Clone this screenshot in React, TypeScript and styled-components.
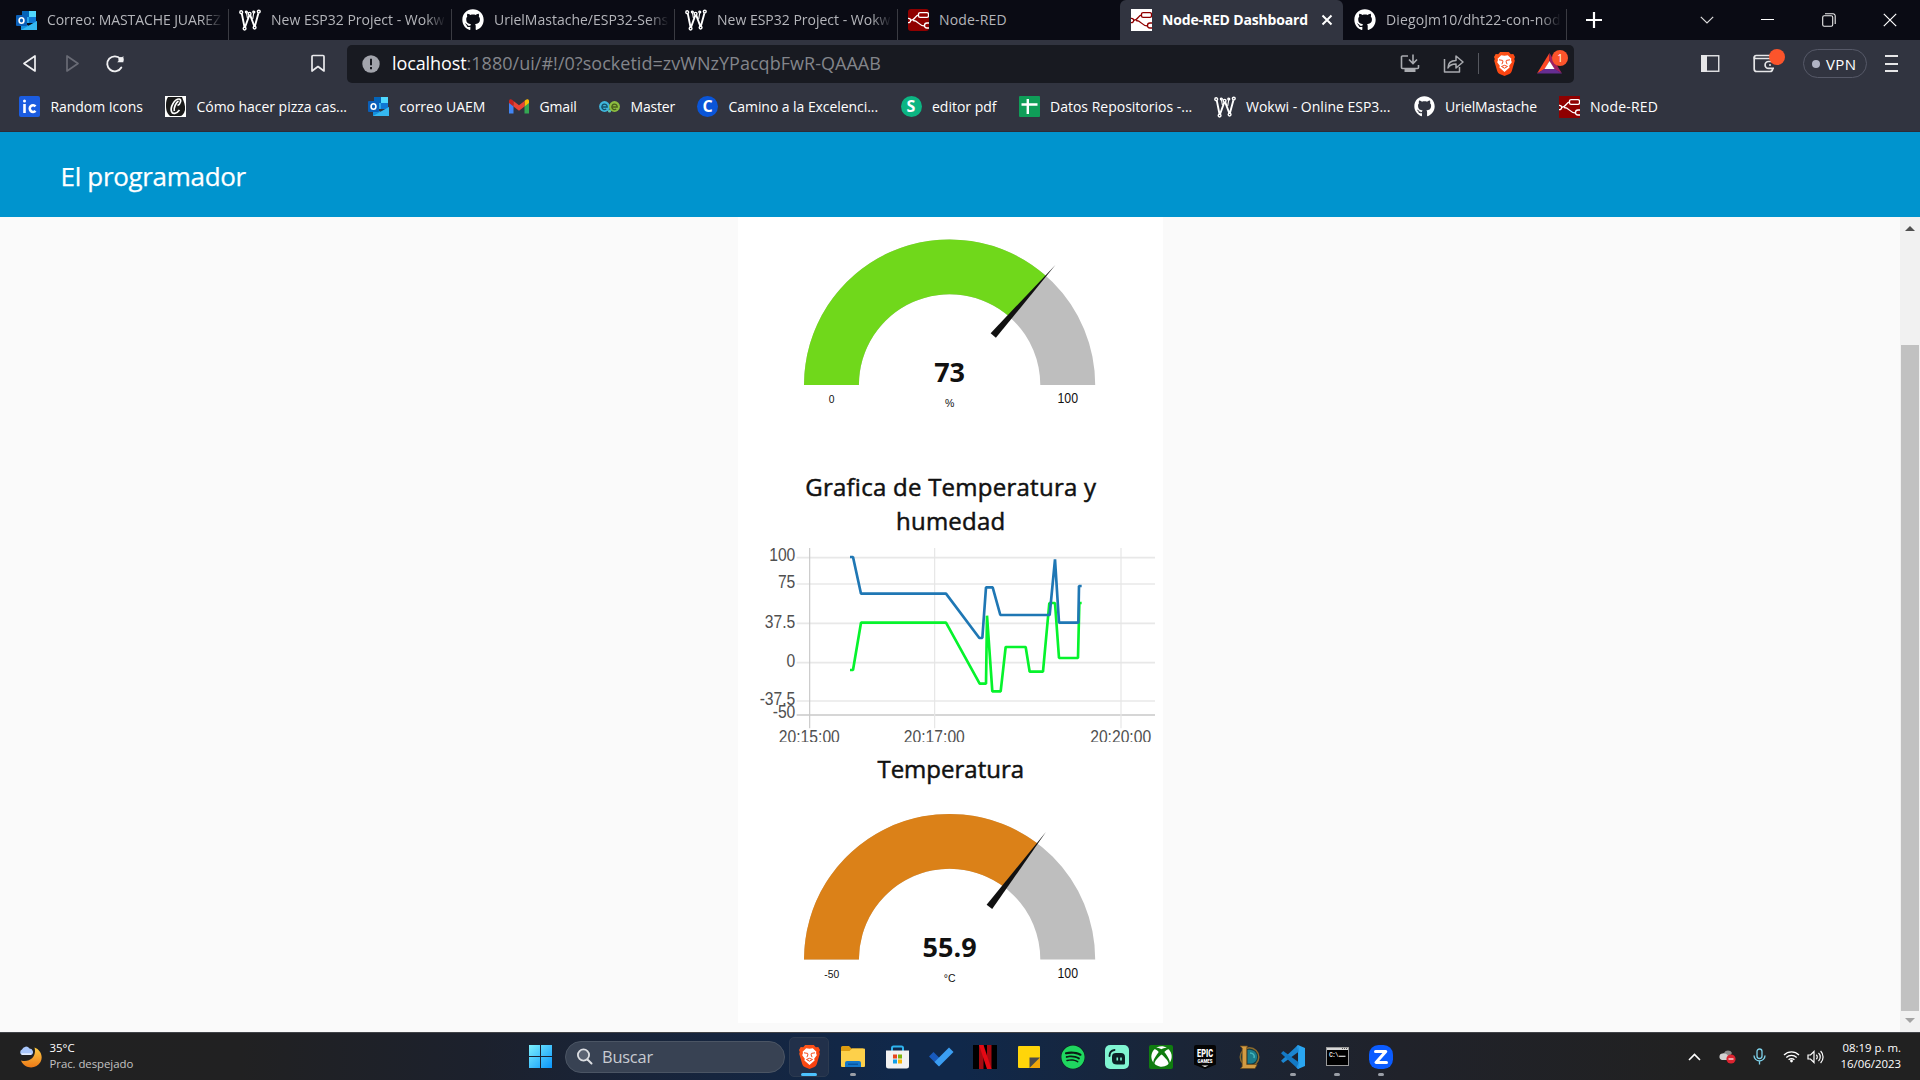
import React, { ReactNode } from "react";
import styled, { createGlobalStyle } from "styled-components";
import { FaGithub, FaSpotify, FaXbox } from "react-icons/fa";

const FONT = `"Open Sans", "Noto Sans", sans-serif`;

const GlobalStyle = createGlobalStyle`
  html, body { margin: 0; padding: 0; background: #fafafa; }
  body { font-family: ${FONT}; overflow: hidden; }
  * { box-sizing: border-box; }
  svg { display: block; flex: none; }
`;

const Screen = styled.div`
  width: 1920px;
  height: 1080px;
  display: flex;
  flex-direction: column;
  overflow: hidden;
`;

/* ---------- tab strip ---------- */

const TabStrip = styled.div`
  height: 40px;
  flex: none;
  display: flex;
  align-items: stretch;
  padding-left: 5px;
  background: #0a0b14;
`;

const Tab = styled.div<{ $active?: boolean; $divider?: boolean }>`
  position: relative;
  flex: 0 0 223px;
  width: 223px;
  display: flex;
  align-items: center;
  padding: 0 5px 0 10.5px;
  color: ${(p) => (p.$active ? "#ffffff" : "#b4b5ba")};
  background: ${(p) => (p.$active ? "#313440" : "transparent")};
  border-radius: 6px 6px 0 0;
  &::after {
    content: "";
    display: ${(p) => (p.$divider ? "block" : "none")};
    position: absolute;
    right: -1px;
    top: 9px;
    bottom: 0;
    width: 1px;
    background: #3a3b42;
  }
`;

const TabTitle = styled.span<{ $bold?: boolean; $fade?: boolean; $spacing?: number }>`
  flex: 1;
  min-width: 0;
  margin-left: 10.5px;
  overflow: hidden;
  white-space: nowrap;
  font-size: 14px;
  line-height: 20px;
  letter-spacing: ${(p) => p.$spacing ?? 0}px;
  font-weight: ${(p) => (p.$bold ? 700 : 400)};
  mask-image: ${(p) => (p.$fade ? "linear-gradient(90deg, #000 88%, transparent 100%)" : "none")};
`;

const TabClose = styled.span`
  width: 22px;
  display: flex;
  justify-content: center;
  margin-left: 3px;
`;

const NewTab = styled.div`
  width: 56px;
  display: flex;
  align-items: center;
  justify-content: center;
`;

const WindowButtons = styled.div`
  margin-left: auto;
  display: flex;
`;

const WindowButton = styled.div`
  width: 61px;
  display: flex;
  align-items: center;
  justify-content: center;
`;

/* ---------- toolbar ---------- */

const Toolbar = styled.div`
  height: 47px;
  flex: none;
  display: flex;
  align-items: center;
  background: #313440;
`;

const NavButtons = styled.div`
  width: 347px;
  display: flex;
  align-items: center;
  padding-left: 22px;
`;

const NavIcon = styled.span<{ $ml?: number }>`
  display: flex;
  margin-left: ${(p) => p.$ml ?? 0}px;
`;

const AddressBar = styled.div`
  width: 1227px;
  height: 38px;
  display: flex;
  align-items: center;
  padding-left: 15px;
  border-radius: 5px;
  background: #181a21;
`;

const Url = styled.span`
  margin-left: 12px;
  font-size: 18px;
  line-height: 26px;
  letter-spacing: 0.03px;
  white-space: nowrap;
  color: #83858b;
  margin-top: -1px;
`;

const Host = styled.span`
  color: #fff;
  letter-spacing: -0.1px;
`;

const AddressActions = styled.div`
  margin-left: auto;
  display: flex;
  align-items: center;
  padding-right: 11px;
`;

const Divider = styled.span`
  width: 1.5px;
  height: 21px;
  margin: 0 15px 0 14px;
  background: #56585f;
`;

const Badged = styled.span<{ $ml: number }>`
  position: relative;
  display: flex;
  margin-left: ${(p) => p.$ml}px;
`;

const Badge = styled.span<{ $top: number; $right: number }>`
  position: absolute;
  top: ${(p) => p.$top}px;
  right: ${(p) => p.$right}px;
  width: 16px;
  height: 16px;
  display: flex;
  align-items: center;
  justify-content: center;
  border-radius: 50%;
  background: #fb542b;
  color: #fff;
  font-size: 10px;
  line-height: 16px;
`;

const ToolbarActions = styled.div`
  flex: 1;
  display: flex;
  align-items: center;
  padding-left: 127px;
`;

const VpnPill = styled.div`
  width: 64px;
  height: 29px;
  margin-left: 28px;
  display: flex;
  align-items: center;
  padding-left: 8px;
  border: 1.5px solid #565968;
  border-radius: 15px;
  color: #fff;
  font-size: 15px;
  letter-spacing: 0.4px;
`;

const VpnDot = styled.span`
  width: 8px;
  height: 8px;
  margin-right: 6px;
  border-radius: 50%;
  background: #b0b3c4;
`;

const Burger = styled.div`
  width: 13px;
  height: 17px;
  margin-left: 18px;
  display: flex;
  flex-direction: column;
  justify-content: space-between;
`;

const BurgerLine = styled.span`
  height: 2px;
  background: #e6e6e8;
`;

/* ---------- bookmarks ---------- */

const Bookmarks = styled.div`
  height: 45px;
  flex: none;
  display: flex;
  align-items: flex-start;
  padding: 9px 0 0 19px;
  background: #313440;
  border-bottom: 1px solid #2c2c37;
`;

const Bookmark = styled.div<{ $w: number }>`
  flex: 0 0 ${(p) => p.$w}px;
  height: 21px;
  display: flex;
  align-items: center;
`;

const BookmarkText = styled.span<{ $spacing?: number }>`
  margin-left: 10.5px;
  color: #fff;
  font-size: 14px;
  line-height: 20px;
  letter-spacing: ${(p) => p.$spacing ?? 0}px;
  white-space: nowrap;
`;

/* ---------- dashboard ---------- */

const DashHeader = styled.header`
  height: 85px;
  flex: none;
  padding: 26px 0 0 60.5px;
  background: #0094ce;
  color: #fff;
  font-size: 26px;
  line-height: 36px;
  letter-spacing: -0.32px;
  -webkit-text-stroke: 0.25px #fff;
`;

const DashBody = styled.main`
  height: 815px;
  flex: none;
  display: flex;
  background: #fafafa;
`;

const Canvas = styled.div`
  flex: 1;
  display: flex;
  justify-content: flex-start;
  align-items: flex-start;
  padding-left: 738px;
`;

const Group = styled.section`
  width: 425px;
  height: 806px;
  display: flex;
  flex-direction: column;
  background: #fff;
`;

const ChartTitle = styled.h2<{ $mt: number; $mb: number; $spacing?: number }>`
  margin: ${(p) => p.$mt}px 60px ${(p) => p.$mb}px 60.5px;
  color: #111;
  font-size: 24px;
  line-height: 34px;
  font-weight: 500;
  letter-spacing: ${(p) => p.$spacing ?? 0}px;
  text-align: center;
  -webkit-text-stroke: 0.5px #111;
`;

const Scrollbar = styled.div`
  width: 20px;
  display: flex;
  flex-direction: column;
  align-items: center;
  background: #f1f1f1;
  padding: 9px 0;
`;

const Thumb = styled.div`
  width: 18px;
  height: 666px;
  margin: 114px 0 auto;
  background: #c1c1c1;
`;

const Arrow = styled.span<{ $down?: boolean }>`
  width: 0;
  height: 0;
  border: 5px solid transparent;
  border-top: ${(p) => (p.$down ? "5px solid #a3a3a3" : "0")};
  border-bottom: ${(p) => (p.$down ? "0" : "5px solid #505050")};
`;

/* ---------- taskbar ---------- */

const Taskbar = styled.footer`
  height: 48px;
  flex: none;
  display: flex;
  align-items: center;
  border-top: 1px solid #414348;
  background: linear-gradient(90deg, #212121 0, #212122 240px, #1c212d 480px, #18243a 650px, #10284a 900px, #10284a 960px, #1a2537 1180px, #20222a 1400px, #212121 1700px);
  color: #fff;
`;

const Weather = styled.div`
  width: 518px;
  display: flex;
  align-items: center;
  padding-left: 18px;
`;

const TwoLines = styled.div<{ $right?: boolean }>`
  display: flex;
  flex-direction: column;
  margin-left: ${(p) => (p.$right ? 0 : 6.5)}px;
  margin-top: -2px;
  font-size: 11.4px;
  line-height: 16px;
  white-space: nowrap;
  text-align: ${(p) => (p.$right ? "right" : "left")};
`;

const Muted = styled.span`
  color: #c3c3c3;
  letter-spacing: -0.05px;
`;

const SearchBox = styled.div`
  width: 220px;
  height: 32px;
  margin: 0 2px 0 3px;
  display: flex;
  align-items: center;
  padding-left: 10px;
  border: 1px solid #4b5564;
  border-radius: 16px;
  background: #384253;
  color: #c8cbd1;
  font-size: 16.4px;
  letter-spacing: -0.2px;
`;

const SearchText = styled.span`
  margin-left: 9px;
`;

const Tile = styled.div<{ $active?: boolean }>`
  position: relative;
  width: 40px;
  height: 40px;
  margin: 0 2px;
  display: flex;
  align-items: center;
  justify-content: center;
  border-radius: 5px;
  border: 1px solid ${(p) => (p.$active ? "#2c3a50" : "transparent")};
  background: ${(p) => (p.$active ? "#21304a" : "transparent")};
`;

const Running = styled.span<{ $active?: boolean }>`
  position: absolute;
  bottom: 0;
  left: 50%;
  width: ${(p) => (p.$active ? 16 : 6)}px;
  height: 3px;
  margin-left: ${(p) => (p.$active ? -8 : -3)}px;
  border-radius: 2px;
  background: ${(p) => (p.$active ? "#4cc2ff" : "#9a9ea6")};
`;

const Tray = styled.div`
  margin-left: auto;
  display: flex;
  align-items: center;
  padding-right: 19px;
`;

const TrayIcon = styled.span<{ $mr: number }>`
  display: flex;
  margin-right: ${(p) => p.$mr}px;
`;

/* ---------- icons ---------- */

const Outlook = () => (
  <svg width="21" height="21" viewBox="0 0 21 21">
    <path d="M6 1h14v12H6z" fill="#28a8ea" />
    <path d="M6 1h7v6H6z" fill="#0364b8" />
    <path d="M13 1h7v6h-7z" fill="#50d9ff" />
    <path d="M13 7h7v6h-7z" fill="#0f78d4" />
    <path d="M5 11l8 5 8-5v9H5z" fill="#1490df" />
    <path d="M5 20L21 11v9z" fill="#35b8f1" />
    <rect x="0" y="5" width="11" height="11" rx="1" fill="#0a5fb8" />
    <ellipse cx="5.5" cy="10.5" rx="2.4" ry="2.8" fill="none" stroke="#fff" strokeWidth="1.6" />
  </svg>
);

const Wokwi = () => (
  <svg width="22" height="22" viewBox="0 0 22 22" fill="none" stroke="#fff" strokeWidth="1.4">
    <path d="M2.8 4.6L5.500 18M6.200 17.800L10.300 6.200M11.200 6.200l4 10.800M16 16.800L19.400 4.200" strokeWidth="1.9" />
    <circle cx="2.200" cy="3.200" r="1.400" />
    <circle cx="10.600" cy="4.800" r="1.400" />
    <circle cx="7.400" cy="3" r=".900" />
    <circle cx="19.800" cy="2.600" r="1.400" />
    <circle cx="14.800" cy="3" r=".900" />
    <circle cx="5.600" cy="19.600" r="1.400" />
    <circle cx="15.600" cy="18.600" r="1.400" />
    <path d="M7.500 4l.900 5M14.700 4l-1 6" strokeWidth="1.100" />
  </svg>
);

const NodeRed = ({ light, radius = 0 }: { light?: boolean; radius?: number }) => {
  const fg = light ? "#8f0000" : "#fff";
  const bg = light ? "#fff" : "#8f0000";
  return (
    <svg width="21" height="22" viewBox="0 0 21 22">
      <rect width="21" height="22" rx={radius} fill={bg} />
      <g fill={bg} stroke={fg} strokeWidth="1.3">
        <path d="M2 11.5C8 11.5 6.5 6 11 6M5 11.5c6 0 5 5.500 12 5.500" fill="none" />
        <rect x="10.500" y="3.600" width="10" height="4.800" rx="1.600" />
        <path d="M-1 9.300h1.500a2 2 0 0 1 0 4.400H-1M22 14h-3a2 2 0 0 0 0 5h3" />
      </g>
    </svg>
  );
};

const IcIcon = () => (
  <svg width="21" height="21" viewBox="0 0 21 21">
    <rect width="21" height="21" rx="2" fill="#1b5ce0" />
    <circle cx="5.500" cy="5" r="1.500" fill="#fff" />
    <path d="M5.500 8v9M16.500 10.300a3.300 3.400 0 1 0 0 4.600" fill="none" stroke="#fff" strokeWidth="2.600" />
  </svg>
);

const PizzaIcon = () => (
  <svg width="21" height="21" viewBox="0 0 21 21">
    <rect width="21" height="21" fill="#fff" />
    <path d="M3 1h14c2 5 3.500 8 3 13-1 4-3 6-5 6H5C1.500 17 1 13 1 9c0-3 .500-6 2-8z" fill="#1a1a1a" />
    <path d="M12.500 9.500c3-1 4.500-6.500 1.500-6.500C9.500 3 5 11 6.500 15.500c1 3 5 2.500 8-1.500M13.500 5c-2.500 1.500-5 7-4.200 10" fill="none" stroke="#fff" strokeWidth="1.700" />
  </svg>
);

const GmailIcon = () => (
  <svg width="20" height="16" viewBox="0 0 20 16">
    <path d="M0 3v11.500h4.500V6z" fill="#4285f4" />
    <path d="M20 3v11.500h-4.500V6z" fill="#34a853" />
    <path d="M15.500 2v5.500L20 4V2c0-2-2-2.500-3.500-1z" fill="#fbbc04" />
    <path d="M4.500 2v5.500L0 4V2C0 0 2-.500 3.500 1z" fill="#c5221f" />
    <path d="M4.500 2L10 6.300 15.500 2v5.500L10 11.700 4.500 7.500z" fill="#ea4335" />
  </svg>
);

const MasterIcon = () => (
  <svg width="21" height="14" viewBox="0 0 21 14" fill="none" strokeWidth="2.200">
    <circle cx="5.500" cy="6.500" r="5.400" fill="#3fb6dd" />
    <circle cx="15.500" cy="6.500" r="5.400" fill="#8cbd3f" />
    <path d="M3 7h5.200a2.700 2.700 0 1 0-1 2" stroke="#15506b" strokeWidth="1.300" />
    <path d="M13 7h5.200a2.700 2.700 0 1 0-1 2" stroke="#4b5f1d" strokeWidth="1.300" />
    <circle cx="10.500" cy="11" r="1.600" fill="#5fc7b0" />
  </svg>
);

const LetterDisc = styled.span<{ $bg: string }>`
  width: 21px;
  height: 21px;
  display: flex;
  align-items: center;
  justify-content: center;
  border-radius: 50%;
  background: ${(p) => p.$bg};
  color: #fff;
  font: 700 16px/21px ${FONT};
`;

const SheetsIcon = () => (
  <svg width="21" height="21" viewBox="0 0 21 21">
    <rect width="21" height="21" rx="1" fill="#0f9d58" />
    <path d="M8.800 3v15M2.500 8.500h16" stroke="#fff" strokeWidth="2.400" />
  </svg>
);

const BackIcon = ({ dim, flip }: { dim?: boolean; flip?: boolean }) => (
  <svg width="15" height="19" viewBox="0 0 15 19">
    <path
      d={flip ? "M2 2v15L13 9.500z" : "M13 2v15L2 9.500z"}
      fill="none"
      stroke={dim ? "#696b75" : "#f0f0f2"}
      strokeWidth="1.700"
      strokeLinejoin="round"
    />
  </svg>
);

const ReloadIcon = () => (
  <svg width="20" height="20" viewBox="0 0 20 20">
    <path d="M16.300 13.500A7.500 7.500 0 1 1 15.500 5" fill="none" stroke="#f0f0f2" strokeWidth="1.900" strokeLinecap="round" />
    <path d="M18.400 2v6.300h-6.200z" fill="#f0f0f2" />
    <circle cx="16" cy="5.500" r="2.600" fill="#f0f0f2" />
  </svg>
);

const BookmarkIcon = () => (
  <svg width="16" height="19" viewBox="0 0 16 19">
    <path d="M2 2.500a1 1 0 0 1 1-1h10a1 1 0 0 1 1 1V17l-6-4.500L2 17z" fill="none" stroke="#e9e9ec" strokeWidth="1.700" strokeLinejoin="round" />
  </svg>
);

const InfoIcon = () => (
  <svg width="18" height="18" viewBox="0 0 18 18">
    <circle cx="9" cy="9" r="8.700" fill="#a2a4ac" />
    <path d="M9 3.800v6.400M9 12v2.200" stroke="#181a21" strokeWidth="2" />
  </svg>
);

const InstallIcon = () => (
  <svg width="20" height="19" viewBox="0 0 20 19" fill="none" stroke="#a9abb0" strokeWidth="1.600">
    <path d="M8 2H2.500a1 1 0 0 0-1 1v10.500a1 1 0 0 0 1 1h15a1 1 0 0 0 1-1V11" />
    <path d="M13 .500V9M9 5.500l4 4 4-4" />
    <path d="M4.500 16.500h11" strokeWidth="3" />
  </svg>
);

const ShareIcon = () => (
  <svg width="21" height="20" viewBox="0 0 21 20" fill="none" stroke="#a9abb0" strokeWidth="1.500" strokeLinejoin="round">
    <path d="M1.500 5v13h15v-5" />
    <path d="M5 14c0-5 3-7.500 8-7.500V2l7 6-7 6v-4c-4 0-6.500 1-8 4z" />
  </svg>
);

const BatIcon = () => (
  <svg width="26" height="21" viewBox="0 0 26 21">
    <path d="M12.500 0L0 20.500l8-4.500 4.500-8z" fill="#ff4724" />
    <path d="M12.500 0L25 20.500 17 16l-4.500-8z" fill="#9e1f63" />
    <path d="M0 20.500h25L17 15.500H8z" fill="#662d91" />
    <path d="M12.500 8l5 8h-10z" fill="#fff" />
  </svg>
);

const SidebarIcon = () => (
  <svg width="19" height="17" viewBox="0 0 19 17">
    <rect x=".750" y=".750" width="17" height="15.500" fill="none" stroke="#e6e6e8" strokeWidth="1.400" />
    <rect x="0" y="0" width="6" height="17" fill="#e6e6e8" />
  </svg>
);

const WalletIcon = () => (
  <svg width="22" height="19" viewBox="0 0 22 19" fill="none" stroke="#e6e6e8" strokeWidth="1.700">
    <path d="M19.500 7V5.500a1 1 0 0 0-1-1H1.500V3A1.500 1.500 0 0 1 3 1.500h14" />
    <path d="M1.200 2.500V15a2.500 2.500 0 0 0 2.500 2.500H17a2.500 2.500 0 0 0 2.500-2.500" />
    <path d="M21 7.500h-5.500a3.400 3.400 0 0 0 0 6.800H21M16 11h2" />
  </svg>
);

const MoonIcon = () => (
  <svg width="25" height="24" viewBox="0 0 25 24">
    <defs>
      <linearGradient id="moon" x1="0" y1="0" x2="0" y2="1">
        <stop offset="0" stopColor="#fccb45" />
        <stop offset="1" stopColor="#ee7a17" />
      </linearGradient>
    </defs>
    <path d="M16.500 2.500c6 2 9 9 6 14.500-4 7.500-16 7.500-19.500-1.500 9 2.500 16-4 13.500-13z" fill="url(#moon)" />
    <path d="M4 10a3 3 0 0 1 0-5.500 4.200 4.200 0 0 1 7.500-1A3.400 3.400 0 0 1 13 10z" fill="#a9c7fb" />
    <path d="M3 8.200h10.500a2 2 0 0 1-1 1.800H4z" fill="#e2ecff" />
  </svg>
);

const WindowsIcon = () => (
  <svg width="23" height="23" viewBox="0 0 23 23">
    <defs>
      <linearGradient id="win" x1="0" y1="0" x2="1" y2="1">
        <stop offset="0" stopColor="#7df0fd" />
        <stop offset="1" stopColor="#0a95fb" />
      </linearGradient>
    </defs>
    <path d="M0 0h11v11H0zM12 0h11v11H12zM0 12h11v11H0zM12 12h11v11H12z" fill="url(#win)" />
  </svg>
);

const SearchIcon = () => (
  <svg width="17" height="17" viewBox="0 0 17 17">
    <circle cx="7.500" cy="7" r="5.600" fill="#5a6272" stroke="#dcdee2" strokeWidth="1.800" />
    <path d="M11.500 11.500l4 4" stroke="#dcdee2" strokeWidth="2" strokeLinecap="round" />
  </svg>
);

const FolderIcon = () => (
  <svg width="24" height="22" viewBox="0 0 24 22">
    <path d="M0 1.500A1.500 1.500 0 0 1 1.500 0H8l2.500 2.500H22V8H0z" fill="#dd9c10" />
    <path d="M0 5h8.500L11 2.500h12A1 1 0 0 1 24 3.500V20a1 1 0 0 1-1 1H1a1 1 0 0 1-1-1z" fill="#fdd04a" />
    <path d="M4 21v-4a2 2 0 0 1 2-2h12a2 2 0 0 1 2 2v4z" fill="#1477c9" />
    <path d="M7 17.500h10v1.500H7z" fill="#0a569e" />
  </svg>
);

const StoreIcon = () => (
  <svg width="23" height="24" viewBox="0 0 23 24">
    <path d="M6 6V3a1.500 1.500 0 0 1 1.500-1.500h8A1.500 1.500 0 0 1 17 3v3" fill="none" stroke="#2fb3ee" strokeWidth="2" />
    <path d="M0 5.500h23V21a2.500 2.500 0 0 1-2.500 2.500h-18A2.500 2.500 0 0 1 0 21z" fill="#f2f2f2" />
    <path d="M7 9.500h4v4H7z" fill="#e8491f" />
    <path d="M12 9.500h4v4h-4z" fill="#7db50b" />
    <path d="M7 14.500h4v4H7z" fill="#10a1ea" />
    <path d="M12 14.500h4v4h-4z" fill="#fbb508" />
  </svg>
);

const TodoIcon = () => (
  <svg width="25" height="20" viewBox="0 0 25 20">
    <path d="M0 9.500L4.500 5l9.500 9.500-4.500 4.500z" fill="#185abd" />
    <path d="M5.500 15L20 .500 24.500 5 10 19.500z" fill="#3b9ef2" />
  </svg>
);

const NetflixIcon = () => (
  <svg width="24" height="24" viewBox="0 0 24 24">
    <rect width="24" height="24" fill="#000" />
    <path d="M6 0h4.500v24H6zM14 0h4.500v24H14z" fill="#a50b12" />
    <path d="M6 0h4.500l8 24H14z" fill="#e50914" />
  </svg>
);

const NotesIcon = () => (
  <svg width="22" height="22" viewBox="0 0 22 22">
    <path d="M0 1a1 1 0 0 1 1-1h20a1 1 0 0 1 1 1v20a1 1 0 0 1-1 1H1a1 1 0 0 1-1-1z" fill="#ffd50a" />
    <path d="M22 11.500V22H11.500z" fill="#f0a50a" />
    <path d="M11.500 22V11.500H22z" fill="#4b4b4b" />
  </svg>
);

const StreamlabsIcon = () => (
  <svg width="24" height="24" viewBox="0 0 24 24">
    <rect width="24" height="24" rx="5" fill="#80f5d2" />
    <path d="M4.500 11c0-3.500 1.500-5.500 5-6" fill="none" stroke="#0b2126" strokeWidth="1.900" strokeLinecap="round" />
    <path d="M7 11.500C7 9 8.500 8 11 8h5c2.500 0 4 1.500 4 4v6c0 1-.500 1.500-1.500 1.500H12c-3.500 0-5-1.500-5-4.500z" fill="#0b2126" />
    <path d="M12.300 12.500v3M16 12.500v3" stroke="#80f5d2" strokeWidth="1.600" />
  </svg>
);

const XboxTile = styled.span`
  width: 24px;
  height: 24px;
  display: flex;
  align-items: center;
  justify-content: center;
  border-radius: 2px;
  background: #107c10;
  color: #fff;
`;

const SpotifyDisc = styled.span`
  display: flex;
  border-radius: 50%;
  background: #0c1d14;
  color: #1fd760;
`;

const EpicIcon = () => (
  <svg width="22" height="24" viewBox="0 0 22 24">
    <path d="M0 2a2 2 0 0 1 2-2h18a2 2 0 0 1 2 2v17.500L11 24 0 19.500z" fill="#050505" />
    <text x="11" y="12" textAnchor="middle" fontFamily="Roboto, sans-serif" fontWeight="900" fontSize="11" textLength="16" lengthAdjust="spacingAndGlyphs" fill="#fff">EPIC</text>
    <text x="11" y="17.500" textAnchor="middle" fontFamily="Roboto, sans-serif" fontWeight="900" fontSize="4.500" textLength="15" lengthAdjust="spacingAndGlyphs" fill="#fff">GAMES</text>
    <path d="M7.500 20.500h7L11 22z" fill="#fff" />
  </svg>
);

const LeagueIcon = () => (
  <svg width="22" height="24" viewBox="0 0 22 24">
    <circle cx="11.500" cy="12" r="9.300" fill="#123a44" stroke="#8d6a2c" strokeWidth="1.400" />
    <path d="M9.500 5c6-1 10 3 9.500 7.500S15.500 19 9.500 18.500z" fill="#1c7c8b" />
    <path d="M12 8c3 0 5 2 4 5" stroke="#46b8bd" strokeWidth="1.500" fill="none" />
    <path d="M2 1h7.500L8.700 3v16.500h10.500L17 23.500H2.500l1.700-2V3z" fill="#d39c43" stroke="#6e4a17" strokeWidth=".700" />
  </svg>
);

const CodeIcon = () => (
  <svg width="24" height="24" viewBox="0 0 24 24">
    <path d="M17 0l7 3v18l-7 3z" fill="#2aa6f1" />
    <path d="M17 0L0 15.700l2.200 2.300L18 6.500z" fill="#1c86d1" />
    <path d="M17 24L0 8.300 2.200 6 18 17.500z" fill="#1479c4" />
    <path d="M17 0l1 6.500V24h-1L15.500 22.500 17.500 18V6L15.500 1.500z" fill="#2697e4" />
  </svg>
);

const TerminalIcon = () => (
  <svg width="23" height="19" viewBox="0 0 23 19">
    <rect x=".500" y=".500" width="22" height="18" fill="#000" stroke="#9b9b9b" />
    <path d="M1 1h21v2H1z" fill="#d8d8d8" />
    <path d="M16 1.500h1M18 1.500h1M20 1.500h1" stroke="#555" />
    <text x="3" y="9.500" fontFamily="Liberation Mono, monospace" fontSize="6.500" fontWeight="700" fill="#ddd" textLength="10">C:\</text>
    <path d="M13 9.300h6.500" stroke="#ddd" strokeWidth="1.200" />
  </svg>
);

const ZoomIcon = () => (
  <svg width="24" height="24" viewBox="0 0 24 24">
    <rect width="24" height="24" rx="9.500" fill="#0b5cff" />
    <path d="M6.500 6.500h10.300L7 17.500h10.500" fill="none" stroke="#fff" strokeWidth="3" strokeLinejoin="round" strokeLinecap="round" />
  </svg>
);

const BraveMark = ({ w, h }: { w: number; h: number }) => (
  <svg width={w} height={h} viewBox="0 0 21 24">
    <defs>
      <linearGradient id="brave" x1="0" y1="0" x2="1" y2="1">
        <stop offset="0" stopColor="#ff5a1c" />
        <stop offset="1" stopColor="#f73a0c" />
      </linearGradient>
    </defs>
    <path d="M6.200 0h8.600l2 2.200 2.500-.200L21 5l-.800 2 .600 1.700-3 10.300c-.500 1.500-1.500 2.500-2.500 3.100L10.500 24l-4.800-1.900c-1-.600-2-1.600-2.500-3.100L.200 8.700.800 7 0 5l1.700-3 2.500.200z" fill="url(#brave)" />
    <path d="M10.500 3.700l3.300-.500 3.600 3.600-.400 1.200.800 2.200-2.600 3.600.400 1.600-2.600 2.400-2.500 2.200L8 17.800l-2.600-2.400.4-1.600-2.600-3.600L4 8l-.400-1.200 3.600-3.600z" fill="#fff" />
    <path d="M5 7.800l3.600.600.300 1.500-1 2.300M16 7.800l-3.600.600-.300 1.500 1 2.300M7.500 14.500l3-1.200 3 1.200-3 1.700z" fill="none" stroke="#f4481a" strokeWidth="1" />
  </svg>
);

/* ---------- gauge and line chart ---------- */

interface GaugeProps {
  value: number;
  min: number;
  max: number;
  label: string;
  unit: string;
  color: string;
  cy: number;
  height: number;
}

const GAUGE_CX = 211.6;
const OUTER = 145.6;
const INNER = 90.7;

function ring(from: number, to: number, cy: number) {
  const pt = (r: number, t: number) => {
    const a = Math.PI * (1 - t);
    return `${(GAUGE_CX + r * Math.cos(a)).toFixed(2)} ${(cy - r * Math.sin(a)).toFixed(2)}`;
  };
  return `M${pt(OUTER, from)}A${OUTER} ${OUTER} 0 0 1 ${pt(OUTER, to)}L${pt(INNER, to)}A${INNER} ${INNER} 0 0 0 ${pt(INNER, from)}Z`;
}

function Gauge({ value, min, max, label, unit, color, cy, height }: GaugeProps) {
  const t = (value - min) / (max - min);
  return (
    <svg width="425" height={height} viewBox={`0 0 425 ${height}`} fill="#111">
      <path d={ring(0, 1, cy)} fill="#bebebe" />
      <path d={ring(0, t, cy)} fill={color} />
      <path d="M-66 -3.500L-160 0L-66 3.500Z" transform={`translate(${GAUGE_CX} ${cy}) rotate(${t * 180})`} />
      <g textAnchor="middle" fontFamily="Liberation Sans, Arial, sans-serif">
        <text x={GAUGE_CX} y={cy - 2.700} fontFamily="Open Sans, Noto Sans, sans-serif" fontWeight="700" fontSize="27">{label}</text>
        <text x={GAUGE_CX} y={cy + 22} fontSize="10.500">{unit}</text>
        <text x="93.700" y={cy + 18} fontSize="10.300">{min}</text>
        <text transform={`translate(329.700 ${cy + 18}) scale(.880 1)`} fontSize="14">{max}</text>
      </g>
    </svg>
  );
}

const BLUE = "360,291 369,291 393,401 648,401 748,534 757,534 768,382 788,382 811,465 959,465 975,298 987,488 1045,488 1047,378 1055,378";
const GREEN = "360,630 369,630 393,488 648,488 749,671 768,671 771,467 787,694 812,694 827,561 887,561 899,635 939,635 958,429 975,429 987,594 1044,594 1048,429 1055,429";
const ROWS: [string, number, number][] = [
  ["100", 293, 304],
  ["75", 372, 383],
  ["37.5", 490, 503],
  ["0", 608, 620],
  ["-37.5", 723, 735],
  ["-50", 765, 774],
];
const TIMES: [string, number][] = [
  ["20:15:00", 239],
  ["20:17:00", 614],
  ["20:20:00", 1173],
];

function LineChart() {
  return (
    <svg width="425" height="194" viewBox="24 264 1275 582">
      {ROWS.map(([text, y]) => (
        <path key={text} d={`M200 ${y}H1275`} stroke={text === "-50" ? "#c9c9c9" : "#e8e8e8"} strokeWidth="5" />
      ))}
      {TIMES.map(([text, x], i) => (
        <path key={text} d={`M${x} 264V805`} stroke={i ? "#e5e5e5" : "#c9c9c9"} strokeWidth="3.500" />
      ))}
      <g fontFamily="Liberation Sans, Arial, sans-serif" fontSize="47" fill="#505050">
        {ROWS.map(([text, , y]) => (
          <text key={text} textAnchor="end" transform={`translate(196 ${y}) scale(1 1.160)`}>{text}</text>
        ))}
        {TIMES.map(([text, x]) => (
          <text key={text} textAnchor="middle" transform={`translate(${x - 1} 850) scale(1 1.160)`}>{text}</text>
        ))}
      </g>
      <g fill="none" strokeWidth="8" strokeLinejoin="bevel">
        <polyline points={GREEN} stroke="#06f32c" />
        <polyline points={BLUE} stroke="#1f77b4" />
      </g>
    </svg>
  );
}

/* ---------- data ---------- */

interface TabItem { icon: ReactNode; title: string; fade?: boolean; divider?: boolean; active?: boolean; spacing?: number; }

const TABS: TabItem[] = [
  { icon: <Outlook />, title: "Correo: MASTACHE JUAREZ", fade: true, divider: true, spacing: -0.08 },
  { icon: <Wokwi />, title: "New ESP32 Project - Wokwi", fade: true, divider: true },
  { icon: <FaGithub size={22} color="#fff" />, title: "UrielMastache/ESP32-Sensor", fade: true, divider: true },
  { icon: <Wokwi />, title: "New ESP32 Project - Wokwi", fade: true, divider: true },
  { icon: <NodeRed radius={3} />, title: "Node-RED", spacing: 0.18 },
  { icon: <NodeRed light />, title: "Node-RED Dashboard", active: true, spacing: -0.17 },
  { icon: <FaGithub size={22} color="#fff" />, title: "DiegoJm10/dht22-con-node", fade: true, divider: true, spacing: 0.12 },
];

const LINKS: { icon: ReactNode; text: string; w: number; spacing?: number }[] = [
  { icon: <IcIcon />, text: "Random Icons", w: 146, spacing: -0.05 },
  { icon: <PizzaIcon />, text: "Cómo hacer pizza cas...", w: 203, spacing: -0.04 },
  { icon: <Outlook />, text: "correo UAEM", w: 141 },
  { icon: <GmailIcon />, text: "Gmail", w: 90, spacing: -0.15 },
  { icon: <MasterIcon />, text: "Master", w: 98, spacing: -0.2 },
  { icon: <LetterDisc $bg="#0a55d8">C</LetterDisc>, text: "Camino a la Excelenci...", w: 203.5, spacing: -0.06 },
  { icon: <LetterDisc $bg="#0cb583">S</LetterDisc>, text: "editor pdf", w: 118 },
  { icon: <SheetsIcon />, text: "Datos Repositorios -...", w: 195 },
  { icon: <Wokwi />, text: "Wokwi - Online ESP3...", w: 200 },
  { icon: <FaGithub size={21} color="#fff" />, text: "UrielMastache", w: 145, spacing: -0.15 },
  { icon: <NodeRed />, text: "Node-RED", w: 110, spacing: 0.22 },
];

const APPS: { icon: ReactNode; state?: "active" | "open" }[] = [
  { icon: <BraveMark w={21} h={24} />, state: "active" },
  { icon: <FolderIcon />, state: "open" },
  { icon: <StoreIcon /> },
  { icon: <TodoIcon /> },
  { icon: <NetflixIcon /> },
  { icon: <NotesIcon /> },
  { icon: <SpotifyDisc><FaSpotify size={24} /></SpotifyDisc> },
  { icon: <StreamlabsIcon /> },
  { icon: <XboxTile><FaXbox size={21} /></XboxTile> },
  { icon: <EpicIcon /> },
  { icon: <LeagueIcon /> },
  { icon: <CodeIcon />, state: "open" },
  { icon: <TerminalIcon />, state: "open" },
  { icon: <ZoomIcon />, state: "open" },
];

export default function App() {
  return (
    <Screen>
      <GlobalStyle />
      <TabStrip>
        {TABS.map((t, i) => (
          <Tab key={i} $active={t.active} $divider={t.divider}>
            {t.icon}
            <TabTitle $bold={t.active} $fade={t.fade} $spacing={t.spacing}>{t.title}</TabTitle>
            {t.active && (
              <TabClose>
                <svg width="12" height="12" viewBox="0 0 12 12"><path d="M1.500 1.500l9 9M10.500 1.500l-9 9" stroke="#fff" strokeWidth="2" /></svg>
              </TabClose>
            )}
          </Tab>
        ))}
        <NewTab>
          <svg width="16" height="16" viewBox="0 0 16 16"><path d="M8 0v16M0 8h16" stroke="#fff" strokeWidth="2.200" /></svg>
        </NewTab>
        <WindowButtons>
          <WindowButton>
            <svg width="14" height="8" viewBox="0 0 14 8"><path d="M.800 .800L7 7 13.200 .800" fill="none" stroke="#ddd" strokeWidth="1.200" /></svg>
          </WindowButton>
          <WindowButton>
            <svg width="13" height="2" viewBox="0 0 13 2"><path d="M0 .500h13" stroke="#fff" /></svg>
          </WindowButton>
          <WindowButton>
            <svg width="14" height="14" viewBox="0 0 14 14" fill="none" stroke="#eee" strokeWidth="1.100">
              <rect x=".700" y="2.700" width="10" height="10.500" rx="1.500" />
              <path d="M3 .700h8a2.200 2.200 0 0 1 2.200 2.200V11" />
            </svg>
          </WindowButton>
          <WindowButton>
            <svg width="14" height="14" viewBox="0 0 14 14"><path d="M.800 .800l12.400 12.400M13.200 .800L.800 13.200" stroke="#fff" strokeWidth="1.200" /></svg>
          </WindowButton>
        </WindowButtons>
      </TabStrip>

      <Toolbar>
        <NavButtons>
          <BackIcon />
          <NavIcon $ml={28}><BackIcon dim flip /></NavIcon>
          <NavIcon $ml={25}><ReloadIcon /></NavIcon>
          <NavIcon $ml={185}><BookmarkIcon /></NavIcon>
        </NavButtons>
        <AddressBar>
          <InfoIcon />
          <Url><Host>localhost</Host>:1880/ui/#!/0?socketid=zvWNzYPacqbFwR-QAAAB</Url>
          <AddressActions>
            <InstallIcon />
            <NavIcon $ml={23}><ShareIcon /></NavIcon>
            <Divider />
            <BraveMark w={21} h={24} />
            <Badged $ml={22}>
              <BatIcon />
              <Badge $top={-3} $right={-5}>1</Badge>
            </Badged>
          </AddressActions>
        </AddressBar>
        <ToolbarActions>
          <SidebarIcon />
          <Badged $ml={33}>
            <WalletIcon />
            <Badge $top={-5} $right={-10} />
          </Badged>
          <VpnPill><VpnDot />VPN</VpnPill>
          <Burger><BurgerLine /><BurgerLine /><BurgerLine /></Burger>
        </ToolbarActions>
      </Toolbar>

      <Bookmarks>
        {LINKS.map((l) => (
          <Bookmark key={l.text} $w={l.w}>
            {l.icon}
            <BookmarkText $spacing={l.spacing}>{l.text}</BookmarkText>
          </Bookmark>
        ))}
      </Bookmarks>

      <DashHeader>El programador</DashHeader>
      <DashBody>
        <Canvas>
          <Group>
            <Gauge value={73} min={0} max={100} label="73" unit="%" color="#70d81b" cy={168} height={240} />
            <ChartTitle $mt={13} $mb={10} $spacing={0.25}>Grafica de Temperatura y humedad</ChartTitle>
            <LineChart />
            <ChartTitle $mt={10} $mb={5}>Temperatura</ChartTitle>
            <Gauge value={55.9} min={-50} max={100} label="55.9" unit="°C" color="#db8118" cy={168.500} height={230} />
          </Group>
        </Canvas>
        <Scrollbar>
          <Arrow />
          <Thumb />
          <Arrow $down />
        </Scrollbar>
      </DashBody>

      <Taskbar>
        <Weather>
          <MoonIcon />
          <TwoLines>
            <span>35°C</span>
            <Muted>Prac. despejado</Muted>
          </TwoLines>
        </Weather>
        <Tile><WindowsIcon /></Tile>
        <SearchBox>
          <SearchIcon />
          <SearchText>Buscar</SearchText>
        </SearchBox>
        {APPS.map((a, i) => (
          <Tile key={i} $active={a.state === "active"}>
            {a.icon}
            {a.state && <Running $active={a.state === "active"} />}
          </Tile>
        ))}
        <Tray>
          <TrayIcon $mr={18}>
            <svg width="13" height="8" viewBox="0 0 13 8"><path d="M1 7l5.500-5.500L12 7" fill="none" stroke="#fff" strokeWidth="1.600" /></svg>
          </TrayIcon>
          <TrayIcon $mr={17}>
            <svg width="17" height="15" viewBox="0 0 17 15">
              <path d="M5 4a4.500 4.500 0 0 1 8 0l-3 4z" fill="#8c8c8c" />
              <path d="M3 11a3.300 3.300 0 0 1 .500-6.500C6 3.500 8 5 9 6.500L12 11z" fill="#d2d2d2" />
              <circle cx="12" cy="10" r="4.600" fill="#dc2430" />
              <path d="M9.500 10h5" stroke="#fff" strokeWidth="1.200" />
            </svg>
          </TrayIcon>
          <TrayIcon $mr={17}>
            <svg width="13" height="17" viewBox="0 0 13 17" fill="none" stroke="#7fd3ec" strokeWidth="1.300">
              <rect x="4" y="1" width="5" height="9.500" rx="2.500" />
              <path d="M1 7.500a5.500 5.500 0 0 0 11 0M6.500 13v3.500" />
            </svg>
          </TrayIcon>
          <TrayIcon $mr={7}>
            <svg width="17" height="13" viewBox="0 0 17 13" fill="none" stroke="#fff" strokeWidth="1.300">
              <path d="M1 5a10.500 10.500 0 0 1 15 0M3.300 7.500a7.300 7.300 0 0 1 10.400 0M5.600 9.800a4.100 4.100 0 0 1 5.800 0" />
              <circle cx="8.500" cy="11" r="1.400" fill="#fff" stroke="none" />
            </svg>
          </TrayIcon>
          <TrayIcon $mr={17}>
            <svg width="17" height="14" viewBox="0 0 17 14" fill="none" stroke="#fff" strokeWidth="1.200">
              <path d="M1 5h2.500L7 1.500v11L3.500 9H1z" />
              <path d="M9.300 4.800a3 3 0 0 1 0 4.400M11.500 3a5.500 5.500 0 0 1 0 8M13.600 1a8.500 8.500 0 0 1 0 12" />
            </svg>
          </TrayIcon>
          <TwoLines $right>
            <span>08:19 p. m.</span>
            <span>16/06/2023</span>
          </TwoLines>
        </Tray>
      </Taskbar>
    </Screen>
  );
}
